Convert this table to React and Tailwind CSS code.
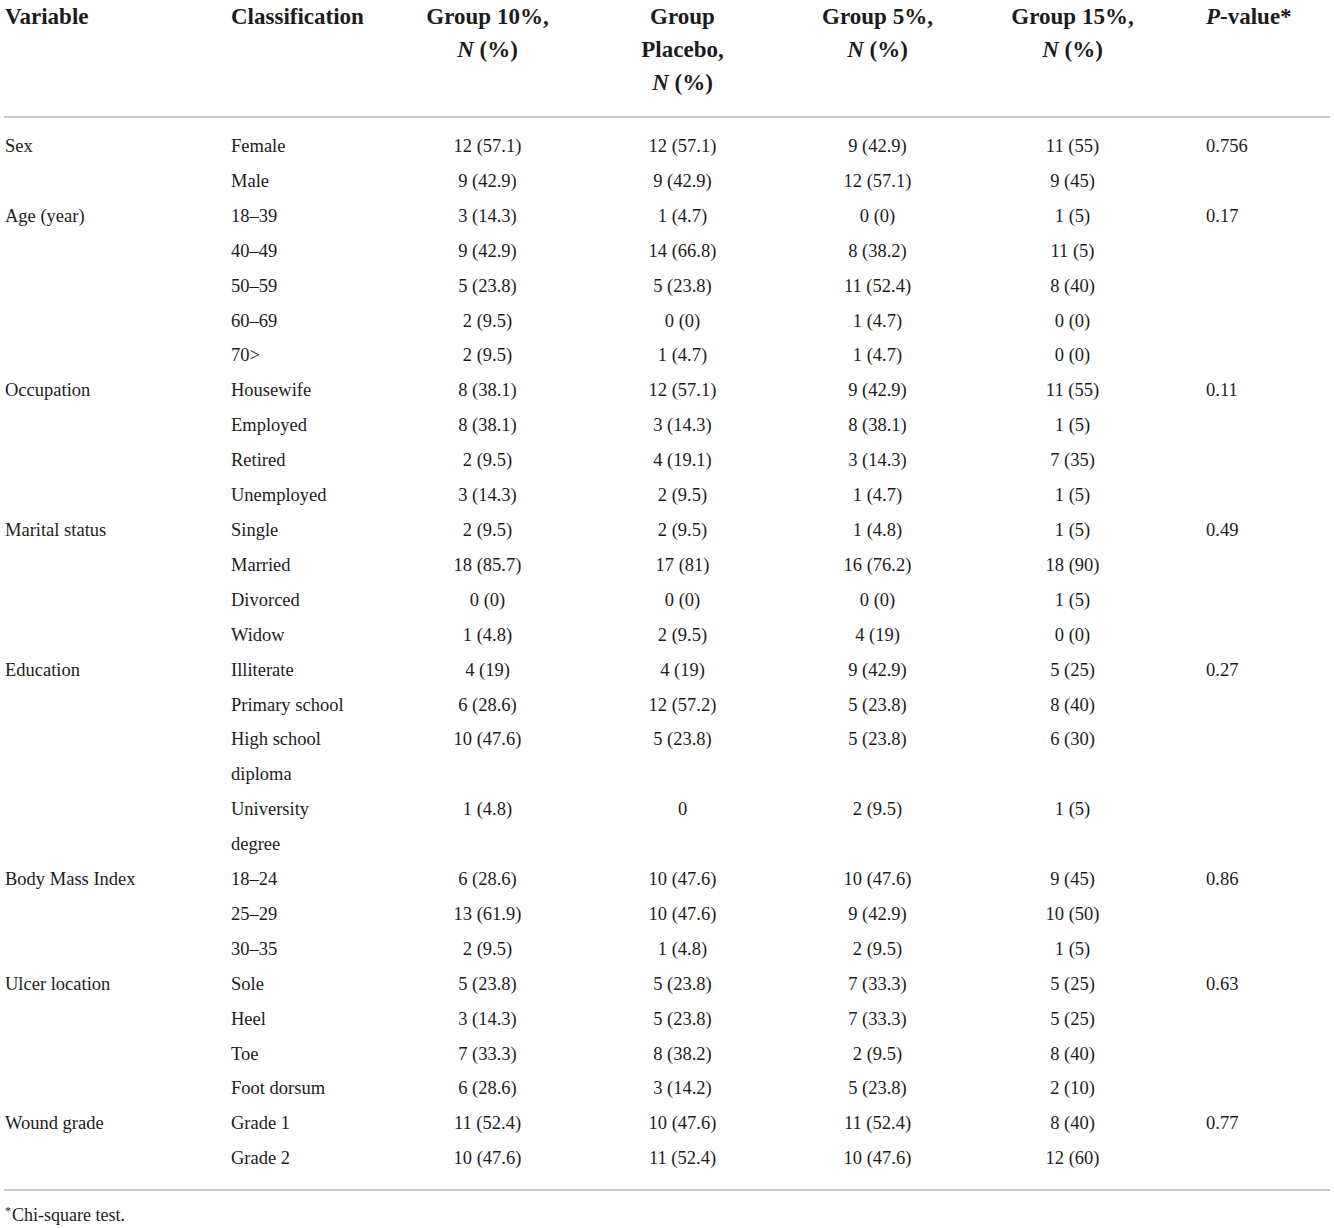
import React from "react";

const groups = [
  { v: "Sex", p: "0.756", rows: [
    ["Female", "12 (57.1)", "12 (57.1)", "9 (42.9)", "11 (55)"],
    ["Male", "9 (42.9)", "9 (42.9)", "12 (57.1)", "9 (45)"],
  ]},
  { v: "Age (year)", p: "0.17", rows: [
    ["18–39", "3 (14.3)", "1 (4.7)", "0 (0)", "1 (5)"],
    ["40–49", "9 (42.9)", "14 (66.8)", "8 (38.2)", "11 (5)"],
    ["50–59", "5 (23.8)", "5 (23.8)", "11 (52.4)", "8 (40)"],
    ["60–69", "2 (9.5)", "0 (0)", "1 (4.7)", "0 (0)"],
    ["70>", "2 (9.5)", "1 (4.7)", "1 (4.7)", "0 (0)"],
  ]},
  { v: "Occupation", p: "0.11", rows: [
    ["Housewife", "8 (38.1)", "12 (57.1)", "9 (42.9)", "11 (55)"],
    ["Employed", "8 (38.1)", "3 (14.3)", "8 (38.1)", "1 (5)"],
    ["Retired", "2 (9.5)", "4 (19.1)", "3 (14.3)", "7 (35)"],
    ["Unemployed", "3 (14.3)", "2 (9.5)", "1 (4.7)", "1 (5)"],
  ]},
  { v: "Marital status", p: "0.49", rows: [
    ["Single", "2 (9.5)", "2 (9.5)", "1 (4.8)", "1 (5)"],
    ["Married", "18 (85.7)", "17 (81)", "16 (76.2)", "18 (90)"],
    ["Divorced", "0 (0)", "0 (0)", "0 (0)", "1 (5)"],
    ["Widow", "1 (4.8)", "2 (9.5)", "4 (19)", "0 (0)"],
  ]},
  { v: "Education", p: "0.27", rows: [
    ["Illiterate", "4 (19)", "4 (19)", "9 (42.9)", "5 (25)"],
    ["Primary school", "6 (28.6)", "12 (57.2)", "5 (23.8)", "8 (40)"],
    [["High school", "diploma"], "10 (47.6)", "5 (23.8)", "5 (23.8)", "6 (30)"],
    [["University", "degree"], "1 (4.8)", "0", "2 (9.5)", "1 (5)"],
  ]},
  { v: "Body Mass Index", p: "0.86", rows: [
    ["18–24", "6 (28.6)", "10 (47.6)", "10 (47.6)", "9 (45)"],
    ["25–29", "13 (61.9)", "10 (47.6)", "9 (42.9)", "10 (50)"],
    ["30–35", "2 (9.5)", "1 (4.8)", "2 (9.5)", "1 (5)"],
  ]},
  { v: "Ulcer location", p: "0.63", rows: [
    ["Sole", "5 (23.8)", "5 (23.8)", "7 (33.3)", "5 (25)"],
    ["Heel", "3 (14.3)", "5 (23.8)", "7 (33.3)", "5 (25)"],
    ["Toe", "7 (33.3)", "8 (38.2)", "2 (9.5)", "8 (40)"],
    ["Foot dorsum", "6 (28.6)", "3 (14.2)", "5 (23.8)", "2 (10)"],
  ]},
  { v: "Wound grade", p: "0.77", rows: [
    ["Grade 1", "11 (52.4)", "10 (47.6)", "11 (52.4)", "8 (40)"],
    ["Grade 2", "10 (47.6)", "11 (52.4)", "10 (47.6)", "12 (60)"],
  ]},
];

const cols = "grid grid-cols-[227px_159px_195px_195px_195px_195px_1fr]";

export default function App() {
  return (
    <div
      className="w-[1334px] bg-white px-[4px] text-[#1c1c1c]"
      style={{ fontFamily: '"Liberation Serif", "Times New Roman", serif' }}
    >
      <div className={`${cols} text-[23px] font-bold leading-[33px] pt-[0px] pb-[17px]`}>
        <div className="pl-[1px]">Variable</div>
        <div>Classification</div>
        <div className="text-center">Group 10%,<br /><i>N</i> (%)</div>
        <div className="text-center">Group<br />Placebo,<br /><i>N</i> (%)</div>
        <div className="text-center">Group 5%,<br /><i>N</i> (%)</div>
        <div className="text-center">Group 15%,<br /><i>N</i> (%)</div>
        <div className="pl-[36px]"><i>P</i>-value*</div>
      </div>
      <div className="h-[2px] bg-[#c9c9c9]" />
      <div className="pt-[11px] pb-[13px] text-[18.5px] leading-[34.9px]">
        {groups.map((g) =>
          g.rows.map((r, i) => (
            <div key={g.v + i} className={`${cols} items-start`}>
              <div className="pl-[1px]">{i === 0 ? g.v : ""}</div>
              <div>
                {Array.isArray(r[0]) ? (
                  <>
                    {r[0][0]}
                    <br />
                    {r[0][1]}
                  </>
                ) : (
                  r[0]
                )}
              </div>
              <div className="text-center">{r[1]}</div>
              <div className="text-center">{r[2]}</div>
              <div className="text-center">{r[3]}</div>
              <div className="text-center">{r[4]}</div>
              <div className="pl-[36px]">{i === 0 ? g.p : ""}</div>
            </div>
          ))
        )}
      </div>
      <div className="h-[2px] bg-[#c9c9c9]" />
      <div className="pt-[13px] pl-[1px] text-[18px] leading-[22px] pb-[3px]">
        <sup className="text-[12px] mr-[1px]">*</sup>Chi-square test.
      </div>
    </div>
  );
}
